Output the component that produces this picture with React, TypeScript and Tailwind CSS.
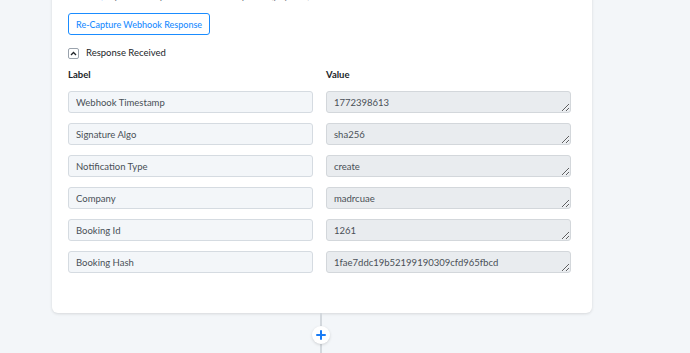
import React from "react";

const rows = [
  { label: "Webhook Timestamp", value: "1772398613" },
  { label: "Signature Algo", value: "sha256" },
  { label: "Notification Type", value: "create" },
  { label: "Company", value: "madrcuae" },
  { label: "Booking Id", value: "1261" },
  { label: "Booking Hash", value: "1fae7ddc19b52199190309cfd965fbcd" },
];

function App() {
  return (
    <div className="w-[690px] h-[353px] overflow-hidden bg-[#f3f6f9] font-['Lato','Liberation_Sans',sans-serif] text-[#212529]">
      {/* Card */}
      <div className="ml-[52px] w-[540px] -mt-[10px] bg-white rounded-md shadow-[0_1px_3px_rgba(0,0,0,0.12)] px-4 pb-[40px]">
        <div className="text-[10px] leading-[10px] text-[#6c757d] h-[12px] overflow-hidden">
          <span className="invisible">Send a</span>{" "}
          <span className="text-[#1a8cff]">(</span>request to capture{" "}
          <span className="text-[#1a8cff]">webhook</span> response (payload)
        </div>

        {/* Re-capture button */}
        <button
          type="button"
          className="mt-[11px] h-[22px] px-[7px] rounded-[3px] border border-[#1a8cff] text-[#1a8cff] text-[9px] font-medium leading-none bg-white"
        >
          Re-Capture Webhook Response
        </button>

        {/* Response toggle */}
        <div className="mt-[12px] flex items-center gap-[7px] h-[12px]">
          <span className="w-[11px] h-[11px] rounded-[2px] border border-[#9aa3ad] flex items-center justify-center">
            <svg width="7" height="5" viewBox="0 0 7 5" fill="none">
              <path d="M1 4 L3.5 1.5 L6 4" stroke="#212529" strokeWidth="1.3" />
            </svg>
          </span>
          <span className="text-[9.5px]">Response Received</span>
        </div>

        {/* Header */}
        <div className="mt-[9px] grid grid-cols-[245px_245px] gap-x-[13px] text-[9.5px] font-bold h-[14px] items-center">
          <div>Label</div>
          <div>Value</div>
        </div>

        {/* Rows */}
        <div className="mt-[9px] flex flex-col gap-[10px]">
          {rows.map((r) => (
            <div key={r.label} className="grid grid-cols-[245px_245px] gap-x-[13px]">
              <input
                readOnly
                value={r.label}
                className="h-[22px] rounded-[3px] border border-[#d5dbe1] bg-[#f3f6f9] px-[7px] text-[9.5px] text-[#495057] outline-none"
              />
              <textarea
                readOnly
                rows={1}
                value={r.value}
                className="h-[22px] min-h-[22px] rounded-[3px] border border-[#d3d7db] bg-[#e9ecef] px-[7px] pt-[4px] text-[9.5px] leading-[13px] text-[#495057] outline-none overflow-hidden resize-y"
              />
            </div>
          ))}
        </div>
      </div>

      {/* Connector */}
      <div className="relative ml-[320px] w-[2px] h-[60px] bg-[#d3d8dd]">
        <div className="absolute left-1/2 top-[13px] -translate-x-1/2 w-[18px] h-[18px] rounded-full bg-white shadow-[0_1px_3px_rgba(0,0,0,0.15)] flex items-center justify-center">
          <svg width="10" height="10" viewBox="0 0 10 10">
            <path d="M5 1 V9 M1 5 H9" stroke="#1a7cf5" strokeWidth="2" strokeLinecap="round" />
          </svg>
        </div>
      </div>
    </div>
  );
}

export default App;
